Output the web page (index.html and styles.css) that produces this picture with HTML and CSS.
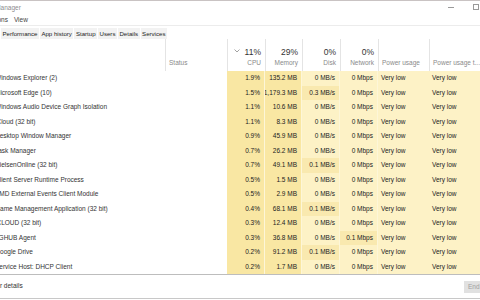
FILE: index.html
```html
<!DOCTYPE html>
<html lang="en">
<head>
    <meta charset="UTF-8">
    <title>Task Manager</title>
    <link rel="stylesheet" href="styles.css">
</head>
<body>
<div class="win">
    <div class="titlebar">
        <span class="title">Task Manager</span>
        <span class="ctl min"></span>
        <span class="ctl max"></span>
    </div>
    <div class="menubar">
        <span>File</span><span>Options</span><span>View</span>
    </div>
    <ul class="tabs">
        <li>Performance</li>
        <li>App history</li>
        <li>Startup</li>
        <li>Users</li>
        <li>Details</li>
        <li>Services</li>
    </ul>

    <div class="grid head">
        <div class="c name"></div>
        <div class="c status"><span class="lbl">Status</span></div>
        <div class="c num cpu">
            <svg class="sort" width="6" height="4" viewBox="0 0 6 4"><path d="M0.5 0.5 L3 3 L5.5 0.5" fill="none" stroke="#8a8a8a" stroke-width="0.8"/></svg>
            <span class="pct">11%</span><span class="lbl">CPU</span>
        </div>
        <div class="c num"><span class="pct">29%</span><span class="lbl">Memory</span></div>
        <div class="c num"><span class="pct">0%</span><span class="lbl">Disk</span></div>
        <div class="c num"><span class="pct">0%</span><span class="lbl">Network</span></div>
        <div class="c txt"><span class="lbl">Power usage</span></div>
        <div class="c txt"><span class="lbl">Power usage t...</span></div>
    </div>

    <div class="rows" id="rows"></div>

    <div class="footer">
        <span class="more">Fewer details</span>
        <span class="btn">End task</span>
    </div>
</div>
<script>
    // name, cpu, memory, disk, network, hot disk, hot net
    var procs = [
        ["Windows Explorer (2)", "1.9%", "135.2 MB", "0 MB/s", "0 Mbps", 0, 0],
        ["Microsoft Edge (10)", "1.5%", "1,179.3 MB", "0.3 MB/s", "0 Mbps", 1, 0],
        ["Windows Audio Device Graph Isolation", "1.1%", "10.6 MB", "0 MB/s", "0 Mbps", 0, 0],
        ["iCloud (32 bit)", "1.1%", "8.3 MB", "0 MB/s", "0 Mbps", 0, 0],
        ["Desktop Window Manager", "0.9%", "45.9 MB", "0 MB/s", "0 Mbps", 0, 0],
        ["Task Manager", "0.7%", "26.2 MB", "0 MB/s", "0 Mbps", 0, 0],
        ["NielsenOnline (32 bit)", "0.7%", "49.1 MB", "0.1 MB/s", "0 Mbps", 1, 0],
        ["Client Server Runtime Process", "0.5%", "1.5 MB", "0 MB/s", "0 Mbps", 0, 0],
        ["AMD External Events Client Module", "0.5%", "2.9 MB", "0 MB/s", "0 Mbps", 0, 0],
        ["Game Management Application (32 bit)", "0.4%", "68.1 MB", "0.1 MB/s", "0 Mbps", 1, 0],
        ["iCLOUD (32 bit)", "0.3%", "12.4 MB", "0 MB/s", "0 Mbps", 0, 0],
        ["LGHUB Agent", "0.3%", "36.8 MB", "0 MB/s", "0.1 Mbps", 0, 1],
        ["Google Drive", "0.2%", "91.2 MB", "0.1 MB/s", "0 Mbps", 1, 0],
        ["Service Host: DHCP Client", "0.2%", "1.7 MB", "0 MB/s", "0 Mbps", 0, 0]
    ];

    var box = document.getElementById("rows");
    var html = "";
    for (var i = 0; i < procs.length; i++) {
        var p = procs[i];
        html += '<div class="grid row">' +
            '<div class="c name"><span>' + p[0] + '</span></div>' +
            '<div class="c status"></div>' +
            '<div class="c num y1">' + p[1] + '</div>' +
            '<div class="c num y1">' + p[2] + '</div>' +
            '<div class="c num ' + (p[5] ? 'y2' : 'y0') + '">' + p[3] + '</div>' +
            '<div class="c num ' + (p[6] ? 'y2' : 'y0') + '">' + p[4] + '</div>' +
            '<div class="c txt y0">Very low</div>' +
            '<div class="c txt y0">Very low</div>' +
            '</div>';
    }
    box.innerHTML = html;
</script>
</body>
</html>
```

FILE: styles.css
```css
*{margin:0;padding:0;box-sizing:border-box}
ul{list-style:none}
html,body{width:480px;height:300px;overflow:hidden;background:#fff}
body{font:6.5px/1 "Liberation Sans", Arial, sans-serif;color:#222}

.win{
    width:480px;
    height:300px;
    border-top:1px solid #c9c3c3;
    overflow:hidden;
}

.titlebar{
    height:15px;
    display:flex;
    align-items:center;
    position:relative;
}
.title{
    margin-left:-20px;
    color:#8c8c8c;
}
.ctl{position:absolute}
.min{
    left:448px;
    top:6px;
    width:6px;
    height:1px;
    background:#9a9a9a;
}
.max{
    left:473px;
    top:3px;
    width:6px;
    height:6px;
    border:1px solid #9a9a9a;
}

.menubar{
    height:10px;
    display:flex;
    align-items:center;
    gap:6px;
    margin-left:-31px;
    color:#444;
    border-bottom:1px solid #ececec;
}

.tabs{
    height:13px;
    display:flex;
    align-items:center;
    gap:1px;
    padding-left:1px;
    padding-top:1px;
    font-size:6.1px;
}
.tabs li{
    height:11px;
    line-height:11px;
    padding:0 1.5px;
    background:#f2f2f2;
    color:#222;
}

.grid{
    display:grid;
    grid-template-columns:165px 62px 38px 37px 38px 38px 51px 1fr;
}

.head{height:32px}
.head .c{
    border-left:1px solid #e4e4e4;
    display:flex;
    flex-direction:column;
    justify-content:flex-end;
    padding-bottom:5px;
    position:relative;
}
.head .name{border-left:0}
.head .num{align-items:flex-end;padding-right:4px}
.head .status,.head .txt{padding-left:3px}
.pct{
    font-size:8.5px;
    color:#333;
    margin-bottom:3px;
}
.lbl{color:#8a8a8a}
.sort{
    position:absolute;
    left:6px;
    top:10px;
}

.rows{height:204px;border-bottom:1px solid #bdbdbd}
.row{height:14.5px}
.row .c{
    display:flex;
    align-items:center;
    white-space:nowrap;
    overflow:hidden;
}
.row .name span{margin-left:-5px;color:#333}
.row .num{justify-content:flex-end;padding-right:4px;border-right:1px solid #fdf6d8}
.row .txt{padding-left:3px}
.y0{background:#fdf2c6}
.y1{background:#f9e7a3}
.y2{background:#f9e9af}

.footer{
    height:24px;
    display:flex;
    align-items:center;
    justify-content:space-between;
    border-bottom:1px solid #c8c8c8;
}
.more{margin-left:-16px;color:#333}
.btn{
    width:60px;
    height:12px;
    margin-right:-44px;
    margin-top:1px;
    padding-left:4px;
    line-height:12px;
    background:#e1e1e1;
    color:#a0a0a0;
}
```
